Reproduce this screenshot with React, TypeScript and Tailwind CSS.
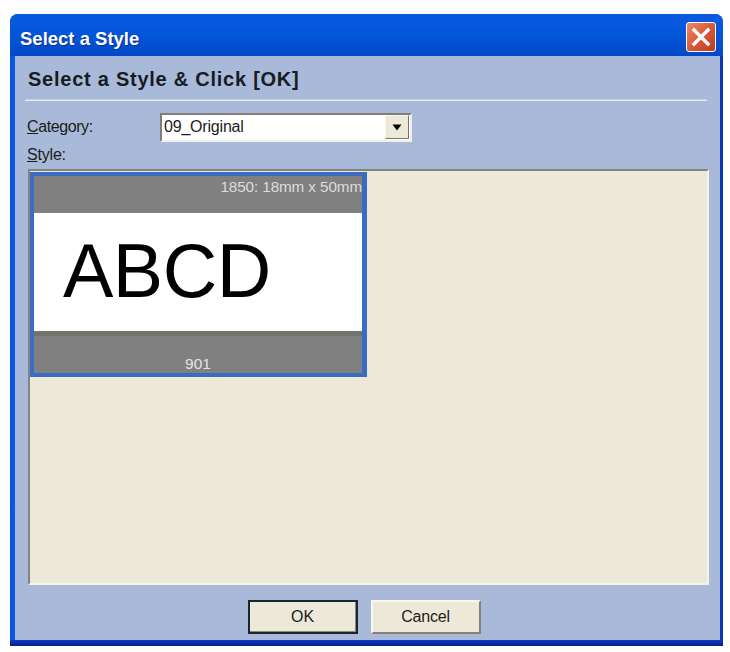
export default function App() {
  const font = { fontFamily: '"Liberation Sans", Arial, sans-serif' };
  return (
    <div className="w-[730px] h-[652px] bg-white pt-[14px] pl-[10px] overflow-hidden" style={font}>
      <div className="w-[713px] h-[632px] flex flex-col rounded-t-[8px] bg-[#0a3fc4] overflow-hidden">
        {/* Title bar */}
        <div className="h-[42px] shrink-0 flex items-center justify-between pl-[10px] pr-[7px] pt-[4px] bg-gradient-to-b from-[#0a5ae0] via-[#0356d8] to-[#0349c8]">
          <span className="text-white font-bold text-[18.5px] leading-none mt-[4px] [text-shadow:1px_1px_1px_#0a2f90]">Select a Style</span>
          <div className="w-[30px] h-[30px] rounded-[3px] border border-white bg-gradient-to-br from-[#e88a68] via-[#d9593a] to-[#bb3a1c] flex items-center justify-center">
            <svg width="20" height="20" viewBox="0 0 20 20">
              <path d="M3 3 L17 17 M17 3 L3 17" stroke="#ffffff" strokeWidth="3.4" strokeLinecap="square" />
            </svg>
          </div>
        </div>
        {/* Body */}
        <div className="flex-1 flex">
          <div className="w-[5px] shrink-0 bg-gradient-to-r from-[#0a4ee0] to-[#0a5cf0]" />
          <div className="flex-1 bg-[#a8b9d9] flex flex-col pl-[10px] pr-[11px]">
            <div className="h-[43px] shrink-0 pl-[3px] pt-[11px] text-[20px] leading-[24px] font-bold tracking-[0.75px] text-[#161c22]">
              Select a Style &amp; Click [OK]
            </div>
            <div className="h-[2px] shrink-0 bg-[#e8ecf2] border-t border-[#c8d0e0] mr-[2px]" />
            <div className="h-[28px] shrink-0 mt-[12px] flex items-center pl-[2px]">
              <span className="w-[133px] text-[16px] text-[#1c1c1c] tracking-[-0.4px]"><span className="underline">C</span>ategory:</span>
              <div className="w-[252px] h-[29px] bg-white border-t-2 border-l-2 border-[#7f7f78] border-r-2 border-b-2 border-r-[#f2f0e6] border-b-[#f2f0e6] flex items-center justify-between pr-[1px]">
                <span className="pl-[2px] text-[16px] text-[#1c1c1c] tracking-[-0.2px]">09_Original</span>
                <div className="w-[24px] h-[24px] bg-[#ece9d8] border border-t-[#f8f6ee] border-l-[#f8f6ee] border-r-[#77756a] border-b-[#77756a] flex items-center justify-center">
                  <svg width="10" height="7" viewBox="0 0 10 7"><path d="M0.5 0.5 H9.5 L5 6.5 Z" fill="#000" /></svg>
                </div>
              </div>
            </div>
            <div className="h-[18px] shrink-0 mt-[5px] pl-[2px] text-[16px] leading-[18px] text-[#1c1c1c] tracking-[-0.2px]"><span className="underline">S</span>tyle:</div>
            {/* List */}
            <div className="w-[681px] ml-[3px] h-[416px] shrink-0 mt-[5px] bg-[#ece9da] border-t-2 border-l-2 border-[#85847c] border-r-2 border-b-2 border-r-[#f6f4ea] border-b-[#f6f4ea] pt-[1px]">
              <div className="w-[337px] h-[205px] border-[4px] border-r-[5px] border-[#3a6cc4] flex flex-col bg-[#808080]">
                <div className="h-[37px] shrink-0 flex justify-end">
                  <span className="text-[15.25px] leading-[18px] mt-[2px] text-[#dcdcdc] whitespace-nowrap tracking-[-0.1px]">1850: 18mm x 50mm</span>
                </div>
                <div className="h-[118px] shrink-0 bg-white flex items-center pl-[29px]">
                  <span className="text-[75.5px] leading-none text-black tracking-[-0.5px] mt-[-1px]">ABCD</span>
                </div>
                <div className="h-[5px] shrink-0 bg-[#74746e]" />
                <div className="flex-1 flex items-end justify-center">
                  <span className="text-[15.5px] leading-[18px] text-[#e4e4e4]">901</span>
                </div>
              </div>
            </div>
            {/* Buttons */}
            <div className="flex-1 flex items-start justify-center gap-[13px] pt-[15px] pr-[6px]">
              <button className="w-[110px] h-[34px] bg-[#ece9d8] border-2 border-[#1c2430] text-[16px] text-[#1c1c1c] shadow-[inset_-1px_-1px_0_#8a887c]">OK</button>
              <button className="w-[110px] h-[34px] bg-[#ece9d8] border-t-2 border-l-2 border-[#f8f7f0] border-r-2 border-b-2 border-r-[#84827a] border-b-[#84827a] text-[16px] tracking-[-0.2px] text-[#1c1c1c]">Cancel</button>
            </div>
          </div>
          <div className="w-[5px] shrink-0 bg-gradient-to-r from-[#0a3cc0] to-[#08289a]" />
        </div>
        <div className="h-[6px] shrink-0 bg-gradient-to-b from-[#0a3cc8] to-[#08207c]" />
      </div>
    </div>
  );
}
